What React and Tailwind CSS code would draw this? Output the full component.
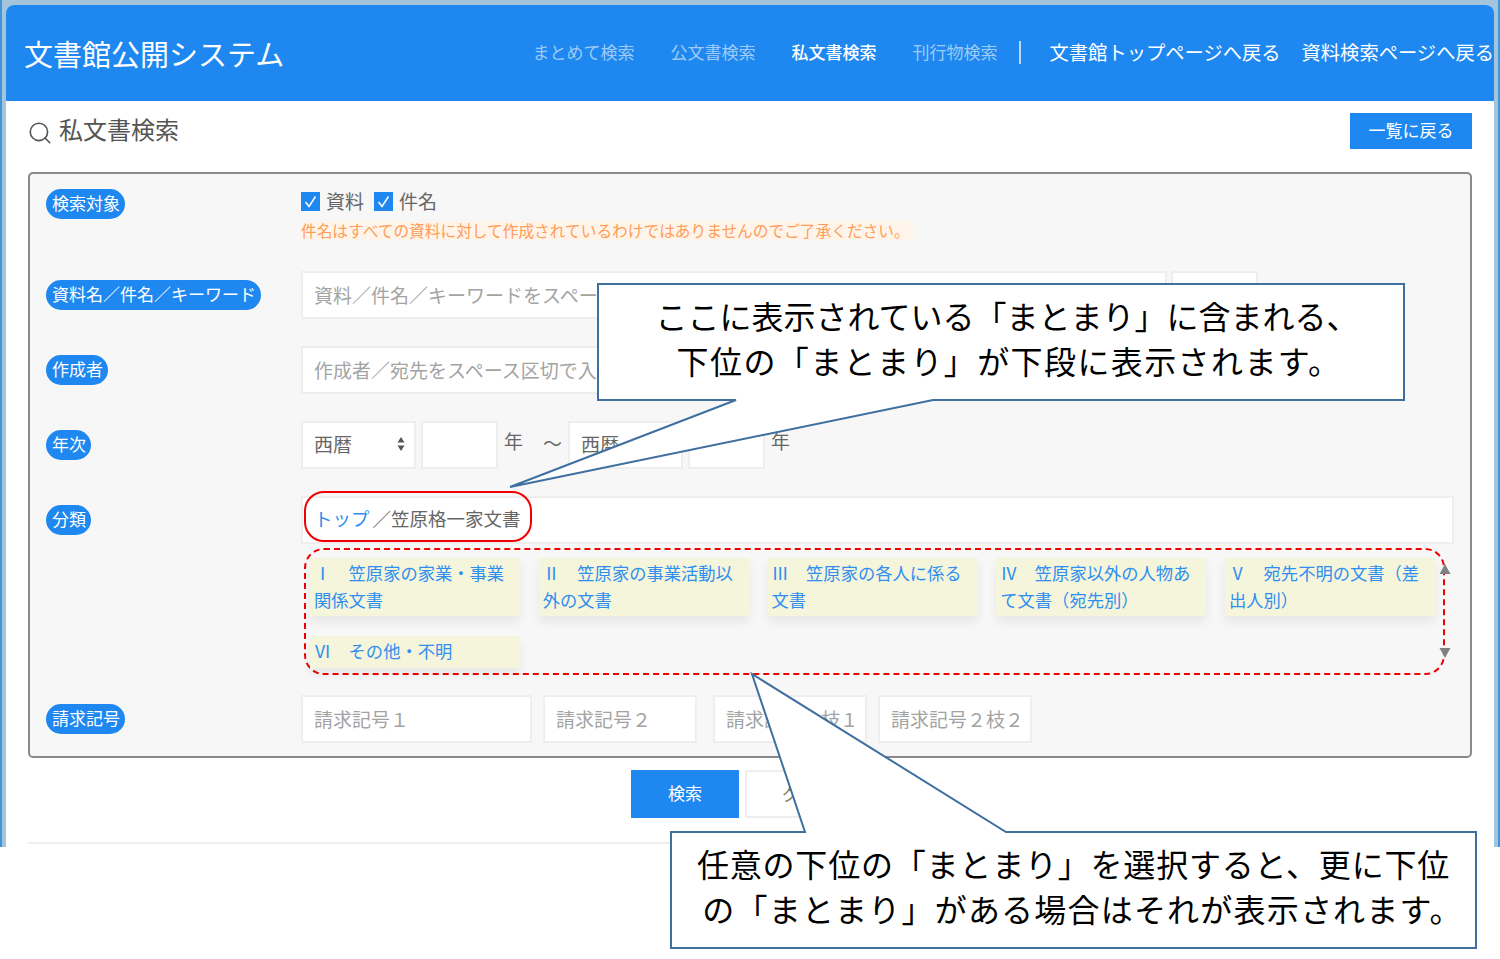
import React from 'react';
import { Search } from 'lucide-react';

const navItems = [
  { label: 'まとめて検索', active: false },
  { label: '公文書検索', active: false },
  { label: '私文書検索', active: true },
  { label: '刊行物検索', active: false },
];

const chips = [
  'Ⅰ　笠原家の家業・事業関係文書',
  'Ⅱ　笠原家の事業活動以外の文書',
  'Ⅲ　笠原家の各人に係る文書',
  'Ⅳ　笠原家以外の人物あて文書（宛先別）',
  'Ⅴ　宛先不明の文書（差出人別）',
  'Ⅵ　その他・不明',
];

function Pill({ children }) {
  return (
    <span className="inline-flex h-[30px] items-center rounded-full bg-[#1e88f0] pr-[5px] pb-[3px] pl-[6px] text-[17px] leading-none whitespace-nowrap text-white">
      {children}
    </span>
  );
}

function Row({ label, className, children }) {
  return (
    <div className={`flex ${className}`}>
      <div className="w-[255px] shrink-0 pt-[9px]">
        <Pill>{label}</Pill>
      </div>
      <div className="min-w-0 flex-1">{children}</div>
    </div>
  );
}

function TextInput({ placeholder, className }) {
  return (
    <input
      placeholder={placeholder}
      className={`h-[48px] border-2 border-[#eeeeee] bg-white px-[11px] pb-[2px] text-[19px] outline-none placeholder:text-[#a3a3a3] ${className}`}
    />
  );
}

function Check({ label }) {
  return (
    <label className="flex items-center gap-[6px] text-[19px] leading-none text-[#666666]">
      <span className="flex h-[19px] w-[19px] items-center justify-center bg-[#1e88f0]">
        <svg viewBox="0 0 19 19" className="h-[19px] w-[19px]" fill="none" stroke="white" strokeWidth="1.5">
          <path d="M4.5 10l3.5 4.5 6.5-10" />
        </svg>
      </span>
      <span className="pb-[2px]">{label}</span>
    </label>
  );
}

function EraSelect() {
  return (
    <div className="relative h-[48px] w-[115px] shrink-0">
      <select className="h-full w-full appearance-none border-2 border-[#eeeeee] bg-white px-[11px] pb-[2px] text-[19px] text-[#666666] outline-none">
        <option>西暦</option>
        <option>和暦</option>
      </select>
      <svg viewBox="0 0 8 14" className="pointer-events-none absolute top-[16px] right-[11px] h-[14px] w-[8px]" fill="#555555">
        <path d="M4 0l3.5 5.5h-7zM4 14L.5 8.5h7z" />
      </svg>
    </div>
  );
}

function Callout({ path, className, lines }) {
  return (
    <>
      <svg viewBox="0 0 1500 959" className="pointer-events-none absolute inset-0 h-[959px] w-[1500px]">
        <path d={path} fill="white" stroke="#3f6f9f" strokeWidth="2" />
      </svg>
      <div className={`absolute flex flex-col items-center justify-center pb-[8px] text-[32px] leading-[45px] whitespace-nowrap text-black ${className}`}>
        {lines.map((line) => (
          <div key={line.text} className={line.spacing}>{line.text}</div>
        ))}
      </div>
    </>
  );
}

export default function App() {
  return (
    <div className="relative h-[959px] w-[1500px] overflow-hidden bg-white font-['Noto_Sans_CJK_JP','Liberation_Sans',sans-serif]">
      <div className="h-[847px] border-r-[2px] border-l-[2px] border-[#3f94dc] bg-[#a3c5dc] px-[4px] pt-[5px]">
        <div className="h-[842px] overflow-hidden rounded-t-[8px] bg-white">
          <header className="flex h-[96px] items-center bg-[#1e88f0] pl-[18px]">
            <h1 className="text-[29px] leading-none font-normal text-white">文書館公開システム</h1>
            <nav className="ml-auto flex items-center pb-[2px] text-[17px]">
              <div className="flex gap-[36px]">
                {navItems.map((item) => (
                  <a key={item.label} className={item.active ? 'font-medium text-white' : 'text-[#9fcbf6]'}>
                    {item.label}
                  </a>
                ))}
              </div>
              <span className="mr-[29px] ml-[21px] h-[23px] w-[2px] bg-[#b9d9f8]" />
              <div className="flex gap-[21px] text-[19.3px] text-white">
                <a>文書館トップページへ戻る</a>
                <a>資料検索ページへ戻る</a>
              </div>
            </nav>
          </header>

          <main className="px-[22px]">
            <div className="flex h-[71px] items-start justify-between pt-[11px]">
              <h2 className="flex items-center gap-[6px] text-[24px] leading-[34px] font-normal text-[#555555]">
                <Search size={26} strokeWidth={1.5} className="mt-[8px] -ml-[1px] text-[#555555]" />
                私文書検索
              </h2>
              <button className="mt-[1px] h-[36px] w-[122px] bg-[#1e88f0] pb-[2px] text-[17px] text-white">一覧に戻る</button>
            </div>

            <section className="h-[586px] rounded-[5px] border-2 border-[#8a8a8a] bg-[#f7f7f7] pt-[15px] pl-[16px]">
              <div className="flex h-[82px]">
                <div className="w-[255px] shrink-0">
                  <Pill>検索対象</Pill>
                </div>
                <div>
                  <div className="flex gap-[10px] pt-[2px]">
                    <Check label="資料" />
                    <Check label="件名" />
                  </div>
                  <p className="mt-[9px] inline-block bg-[#fff4ea] pr-[4px] text-[15.7px] leading-[19px] whitespace-nowrap text-[#ff9d57]">
                    件名はすべての資料に対して作成されているわけではありませんのでご了承ください。
                  </p>
                </div>
              </div>

              <Row label="資料名／件名／キーワード" className="h-[75px]">
                <div className="flex gap-[4px]">
                  <TextInput placeholder="資料／件名／キーワードをスペース区切で入力" className="w-[866px]" />
                  <div className="h-[48px] w-[87px] border-2 border-[#eeeeee] bg-white" />
                </div>
              </Row>

              <Row label="作成者" className="h-[75px]">
                <TextInput placeholder="作成者／宛先をスペース区切で入力" className="w-[866px]" />
              </Row>

              <Row label="年次" className="h-[75px]">
                <div className="flex text-[19px] text-[#666666]">
                  <EraSelect />
                  <TextInput className="ml-[5px] w-[77px]" />
                  <span className="ml-[6px] leading-[40px]">年</span>
                  <span className="ml-[20px] leading-[44px]">～</span>
                  <div className="ml-[6px]"><EraSelect /></div>
                  <TextInput className="ml-[5px] w-[77px]" />
                  <span className="ml-[6px] leading-[40px]">年</span>
                </div>
              </Row>

              <Row label="分類" className="h-[199px]">
                <div className="relative flex h-[48px] w-[1153px] items-center border-2 border-[#eeeeee] bg-white pb-[2px] pl-[11px] text-[18.5px] text-[#666666]">
                  <a className="text-[#2f8fef]">トップ</a>
                  <span className="ml-[3px]">／笠原格一家文書</span>
                  <span className="absolute -top-[7px] left-[1px] h-[51px] w-[228px] rounded-[20px] border-2 border-[#f00000]" />
                </div>
                <div className="relative mt-[4px] ml-[3px] flex h-[127px] w-[1141px] flex-wrap content-start gap-x-[18.75px] gap-y-[20px] rounded-[20px] border-2 border-dashed border-[#f00000] pt-[8px] pl-[4px]">
                  {chips.map((chip, i) => (
                    <a
                      key={chip}
                      className={`w-[210px] bg-[#f5f5dc] px-[4px] py-[2px] text-[17.3px] leading-[26.5px] text-[#2f8fef] shadow-[0_6px_10px_rgba(0,0,0,0.07)] ${i === 5 ? 'h-[32px]' : 'h-[58px]'}`}
                    >
                      {chip}
                    </a>
                  ))}
                  <svg viewBox="0 0 12 94" className="absolute top-[14px] -right-[8px] h-[94px] w-[12px]" fill="#808080">
                    <path d="M6 0l5.5 10H.5zM6 94L.5 84h11z" />
                  </svg>
                </div>
              </Row>

              <Row label="請求記号" className="">
                <div className="flex">
                  <TextInput placeholder="請求記号１" className="w-[231px]" />
                  <TextInput placeholder="請求記号２" className="ml-[11px] w-[154px]" />
                  <TextInput placeholder="請求記号１枝１" className="ml-[16px] w-[154px]" />
                  <TextInput placeholder="請求記号２枝２" className="ml-[11px] w-[154px]" />
                </div>
              </Row>
            </section>

            <div className="flex justify-center gap-[6px] pt-[12px]">
              <button className="h-[48px] w-[108px] bg-[#1e88f0] pb-[2px] text-[17px] text-white">検索</button>
              <button className="h-[48px] w-[124px] border-2 border-[#eeeeee] bg-white text-[17px] text-[#8a7a60]">クリア</button>
            </div>
            <hr className="mt-[24px] border-t-2 border-[#eeeeee]" />
          </main>
        </div>
      </div>

      <Callout
        path="M598 284H1404V400H933L510 487L736 400H598Z"
        className="top-[284px] left-[598px] h-[116px] w-[806px]"
        lines={[
          { text: 'ここに表示されている「まとまり」に含まれる、', spacing: 'pl-[12px] tracking-[0px]' },
          { text: '下位の「まとまり」が下段に表示されます。', spacing: 'pl-[16px] tracking-[1.4px]' },
        ]}
      />
      <Callout
        path="M671 832H805L752 674L1006 832H1476V948H671Z"
        className="top-[832px] left-[671px] h-[116px] w-[805px]"
        lines={[
          { text: '任意の下位の「まとまり」を選択すると、更に下位', spacing: 'tracking-[0.8px]' },
          { text: 'の「まとまり」がある場合はそれが表示されます。', spacing: 'pl-[18px] tracking-[1.2px]' },
        ]}
      />
    </div>
  );
}
